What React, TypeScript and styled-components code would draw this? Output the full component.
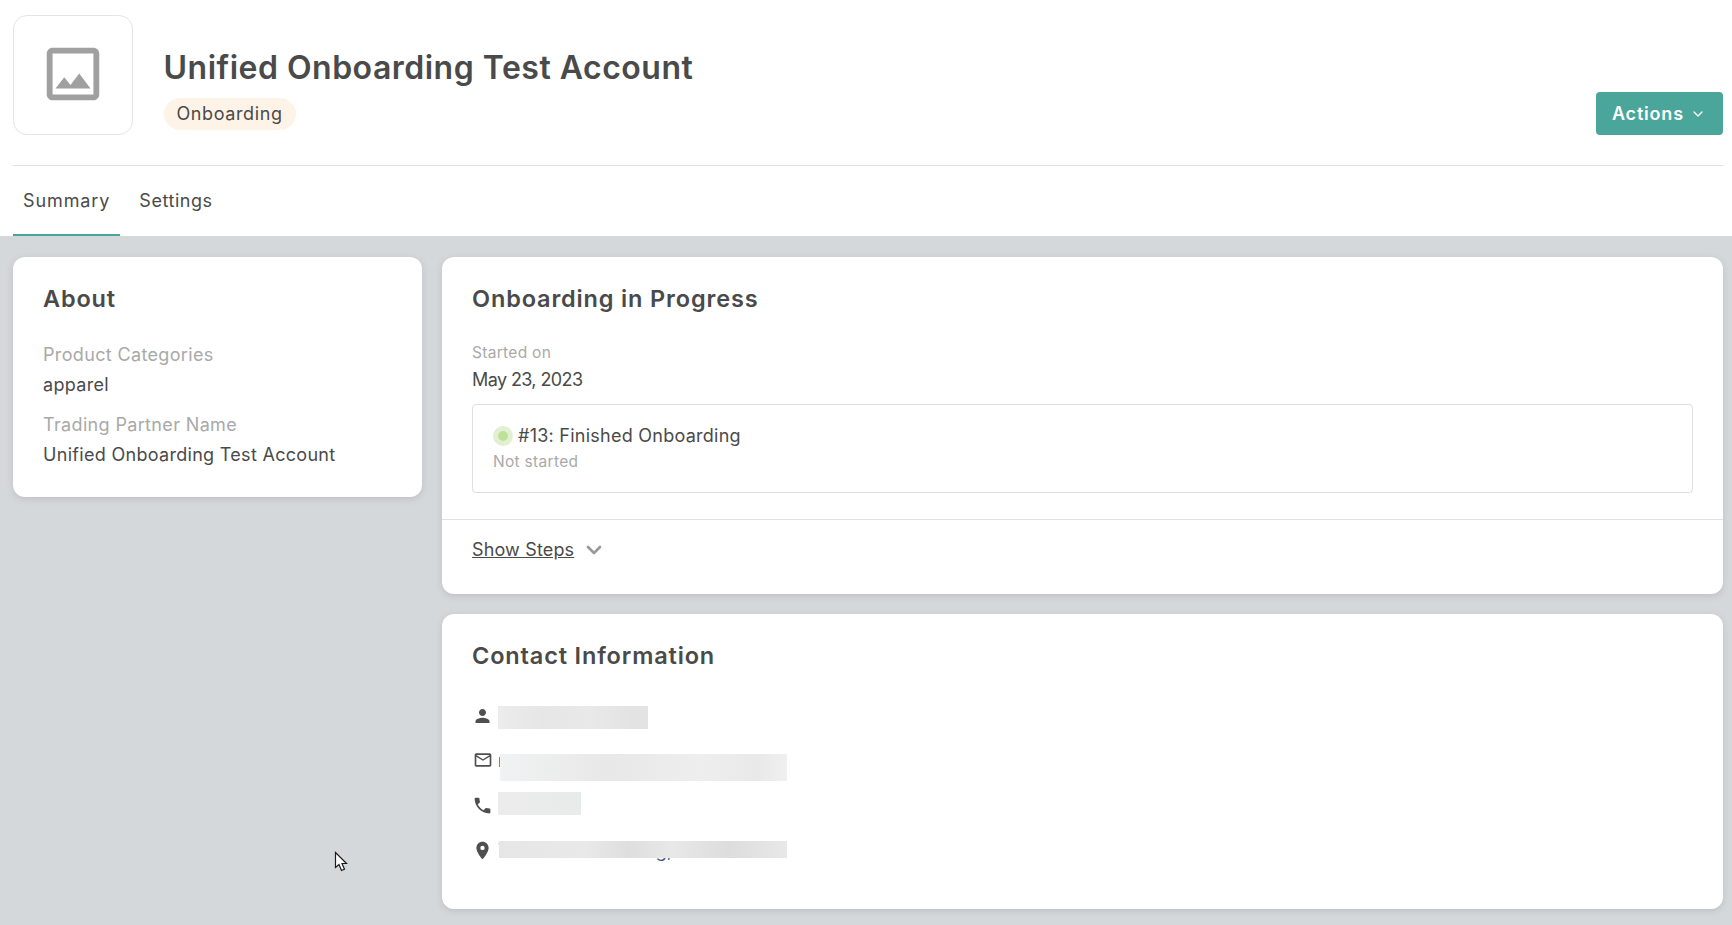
import styled, { createGlobalStyle } from "styled-components";
import { ChevronDown } from "lucide-react";
import {
  MdMailOutline,
  MdOutlineImage,
  MdPerson,
  MdPhone,
  MdPlace,
} from "react-icons/md";

const GlobalStyle = createGlobalStyle`
  html, body {
    margin: 0;
    padding: 0;
    height: 100%;
    overflow: hidden;
    background: #fff;
  }
  * { box-sizing: border-box; }
  body {
    font-family: Inter, "Liberation Sans", sans-serif;
    color: #4a4a4a;
  }
`;

const Page = styled.div`
  position: relative;
  height: 925px;
  display: flex;
  flex-direction: column;
`;

const Header = styled.header`
  padding: 15px 9px 0 13px;
  background: #fff;
`;

const HeaderTop = styled.div`
  display: flex;
  align-items: flex-end;
  padding-bottom: 30px;
  border-bottom: 1px solid #e0e0e0;
`;

const LogoBox = styled.div`
  width: 120px;
  height: 120px;
  padding-bottom: 2px;
  display: flex;
  align-items: center;
  justify-content: center;
  border: 1px solid #e4e4e4;
  border-radius: 14px;
  color: #a0a0a0;
`;

const TitleBlock = styled.div`
  flex: 1;
  margin-left: 30.5px;
  align-self: flex-start;
  padding-top: 33px;
`;

const Title = styled.h1`
  margin: 0 0 10px;
  font-size: 32px;
  line-height: 40px;
  font-weight: 600;
  letter-spacing: 0.5px;
`;

const Badge = styled.span`
  display: inline-block;
  height: 32px;
  padding: 0 13px;
  border-radius: 16px;
  background: #fdf3e7;
  font-size: 18px;
  line-height: 32px;
  letter-spacing: 0.6px;
`;

const ActionsButton = styled.button`
  height: 43px;
  width: 127px;
  padding: 0 0 0 16px;
  display: flex;
  align-items: center;
  gap: 6px;
  border: 0;
  border-radius: 4px;
  background: #4aa59a;
  color: #fff;
  font-family: inherit;
  font-size: 18px;
  font-weight: 600;
  letter-spacing: 0.8px;
`;

const Tabs = styled.nav`
  display: flex;
  height: 70px;
`;

const Tab = styled.div<{ $active?: boolean }>`
  display: flex;
  align-items: center;
  padding: 0 10px;
  margin-right: 9px;
  font-size: 18px;
  letter-spacing: ${(p) => (p.$active ? "0.9px" : "0.55px")};
  border-bottom: 2px solid ${(p) => (p.$active ? "#4aa59a" : "transparent")};
`;

const Body = styled.main`
  flex: 1;
  display: grid;
  grid-template-columns: 409px 1fr;
  gap: 20px;
  align-items: start;
  padding: 21px 9px 16px 13px;
  background: #d5d8da;
`;

const Column = styled.div`
  display: flex;
  flex-direction: column;
  gap: 20px;
`;

const Card = styled.section`
  background: #fff;
  border-radius: 12px;
  padding: 27px 30px 30px;
  box-shadow: 0 2px 6px rgba(120, 125, 140, 0.25);
`;

const CardTitle = styled.h2`
  margin: 0;
  font-size: 23.5px;
  line-height: 30px;
  font-weight: 600;
  letter-spacing: 0.85px;
`;

const Field = styled.div`
  margin-top: 16px;
  &:first-of-type {
    margin-top: 29px;
  }
`;

const FieldLabel = styled.div`
  font-size: 18px;
  line-height: 24px;
  letter-spacing: 0.35px;
  color: #a9a9a9;
`;

const FieldValue = styled.div`
  margin-top: 6px;
  font-size: 18px;
  line-height: 24px;
  letter-spacing: 0.3px;
`;

const StartedLabel = styled.div`
  margin-top: 28px;
  font-size: 15.5px;
  line-height: 22px;
  letter-spacing: 0.3px;
  color: #a9a9a9;
`;

const StartedDate = styled.div`
  margin-top: 4px;
  font-size: 18px;
  line-height: 24px;
  letter-spacing: -0.6px;
`;

const StepBox = styled.div`
  margin-top: 12px;
  padding: 19px 20px;
  border: 1px solid #dedede;
  border-radius: 4px;
`;

const StepName = styled.div`
  display: flex;
  align-items: center;
  gap: 5px;
  font-size: 18px;
  line-height: 24px;
  letter-spacing: 0.25px;
`;

const StepDot = styled.span`
  width: 20px;
  height: 20px;
  flex: none;
  border-radius: 50%;
  background: #bfe09a;
  border: 5px solid #e1f0d0;
`;

const StepStatus = styled.div`
  margin-top: 3px;
  font-size: 15.5px;
  line-height: 22px;
  letter-spacing: 0.3px;
  color: #a9a9a9;
`;

const ProgressCard = styled(Card)`
  padding-bottom: 32px;
`;

const Divider = styled.hr`
  margin: 26px -30px 18px;
  border: 0;
  border-top: 1px solid #e0e0e0;
`;

const ShowSteps = styled.div`
  height: 24px;
  display: flex;
  align-items: center;
  gap: 8px;
  font-size: 18px;
  line-height: 24px;
  letter-spacing: 0.15px;
  color: #999;
`;

const ShowStepsLink = styled.a`
  color: #4a4a4a;
  text-decoration: underline;
`;

const ContactCard = styled(Card)`
  padding-bottom: 36px;
`;

const ContactList = styled.div`
  margin-top: 22px;
`;

const ContactRow = styled.div`
  position: relative;
  height: 45px;
  display: flex;
  align-items: center;
  gap: 5px;
  font-size: 18px;
  color: #4a4a4a;
`;

const ContactIcon = styled.span`
  width: 21px;
  height: 21px;
  display: flex;
  justify-content: center;
  color: #4f4f4f;
`;

const MailText = styled.span`
  color: #5a2a12;
`;

const AddressTail = styled.span`
  margin-left: 146px;
  color: #4a5a80;
`;

const Redaction = styled.div<{
  $left: number;
  $top: number;
  $width: number;
  $height: number;
  $tone: string;
}>`
  position: absolute;
  left: ${(p) => p.$left}px;
  top: ${(p) => p.$top}px;
  width: ${(p) => p.$width}px;
  height: ${(p) => p.$height}px;
  background: ${(p) => p.$tone};
`;

const Cursor = styled.svg`
  position: absolute;
  left: 334px;
  top: 851px;
`;

const contacts = [
  {
    icon: <MdPerson size={22} />,
    text: null,
    box: { left: 26, top: 13, width: 150, height: 23 },
    tone: "linear-gradient(90deg, #ececec, #e6e6e6 30%, #e9e9e9 60%, #e3e3e3 90%)",
  },
  {
    icon: <MdMailOutline size={20} />,
    text: <MailText>r</MailText>,
    box: { left: 28, top: 16, width: 287, height: 27 },
    tone: "linear-gradient(90deg, #f1f2f3, #e8e8e8 38%, #eeeeee 70%, #e9e9e9 90%, #f0f0f0)",
  },
  {
    icon: <MdPhone size={21} />,
    text: null,
    box: { left: 26, top: 9, width: 83, height: 23 },
    tone: "linear-gradient(90deg, #ececec, #e9eaea)",
  },
  {
    icon: <MdPlace size={21} />,
    text: (
      <>
        T<AddressTail>g,</AddressTail>
      </>
    ),
    box: { left: 27, top: 13, width: 288, height: 17 },
    tone: "linear-gradient(90deg, #e6e6e6, #e9e9e9 30%, #dedede 45%, #e8e8e8 60%, #dddddd 80%, #e8e8e8)",
  },
];

const App = () => {
  return (
    <>
      <GlobalStyle />
      <Page>
        <Header>
          <HeaderTop>
            <LogoBox>
              <MdOutlineImage size={70} />
            </LogoBox>
            <TitleBlock>
              <Title>Unified Onboarding Test Account</Title>
              <Badge>Onboarding</Badge>
            </TitleBlock>
            <ActionsButton>
              Actions
              <ChevronDown size={16} strokeWidth={2} />
            </ActionsButton>
          </HeaderTop>
          <Tabs>
            <Tab $active>Summary</Tab>
            <Tab>Settings</Tab>
          </Tabs>
        </Header>
        <Body>
          <Column>
            <Card>
              <CardTitle>About</CardTitle>
              <Field>
                <FieldLabel>Product Categories</FieldLabel>
                <FieldValue>apparel</FieldValue>
              </Field>
              <Field>
                <FieldLabel>Trading Partner Name</FieldLabel>
                <FieldValue>Unified Onboarding Test Account</FieldValue>
              </Field>
            </Card>
          </Column>
          <Column>
            <ProgressCard>
              <CardTitle>Onboarding in Progress</CardTitle>
              <StartedLabel>Started on</StartedLabel>
              <StartedDate>May 23, 2023</StartedDate>
              <StepBox>
                <StepName>
                  <StepDot />
                  #13: Finished Onboarding
                </StepName>
                <StepStatus>Not started</StepStatus>
              </StepBox>
              <Divider />
              <ShowSteps>
                <ShowStepsLink>Show Steps</ShowStepsLink>
                <ChevronDown size={24} strokeWidth={2.6} />
              </ShowSteps>
            </ProgressCard>
            <ContactCard>
              <CardTitle>Contact Information</CardTitle>
              <ContactList>
                {contacts.map((c, i) => (
                  <ContactRow key={i}>
                    <ContactIcon>{c.icon}</ContactIcon>
                    {c.text && <span>{c.text}</span>}
                    <Redaction
                      $left={c.box.left}
                      $top={c.box.top}
                      $width={c.box.width}
                      $height={c.box.height}
                      $tone={c.tone}
                    />
                  </ContactRow>
                ))}
              </ContactList>
            </ContactCard>
          </Column>
        </Body>
        <Cursor width="15" height="22" viewBox="0 0 15 22">
          <path
            d="M1.5 1.5 L1.5 16.5 L5 13.5 L7.5 19.5 L10.5 18.2 L8 12.5 L12.5 12.5 Z"
            fill="#fff"
            stroke="#1c1c1c"
            strokeWidth="1.2"
          />
        </Cursor>
      </Page>
    </>
  );
};

export default App;
